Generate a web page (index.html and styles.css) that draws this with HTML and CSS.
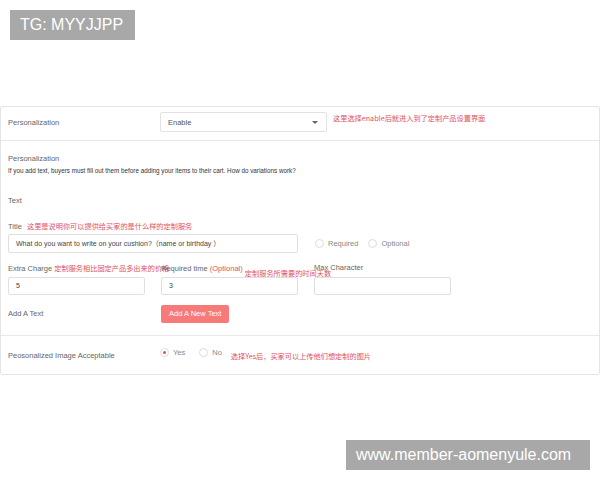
FILE: index.html
```html
<!DOCTYPE html>
<html lang="en">
<head>
    <meta charset="UTF-8">
    <title>Personalization</title>
    <link rel="stylesheet" href="styles.css">
</head>
<body>
    <div class="watermark watermark-top">TG: MYYJJPP</div>

    <div class="panel">
        <div class="row row-head">
            <span class="row-label">Personalization</span>
            <div class="select">
                <span>Enable</span>
                <span class="caret"></span>
            </div>
            <span class="note note-head">这里选择enable后就进入到了定制产品设置界面</span>
        </div>

        <div class="section">
            <div class="line title-line">Personalization</div>
            <div class="line hint">If you add text, buyers must fill out them before adding your items to their cart. How do variations work?</div>
            <div class="line text-line">Text</div>
            <div class="line label-line">Title <span class="note">这里是说明你可以提供给买家的是什么样的定制服务</span></div>

            <div class="fields">
                <div class="input wide">What do you want to write on your cushion?（name or birthday ）</div>
                <div class="radios">
                    <span class="radio"><i class="dot"></i>Required</span>
                    <span class="radio"><i class="dot"></i>Optional</span>
                </div>

                <div class="field-label">Extra Charge <span class="note">定制服务相比固定产品多出来的价格</span></div>
                <div class="field-label">Required time <span class="opt">(Optional)</span> <span class="note note-low">定制服务所需要的时间天数</span></div>
                <div class="field-label">Max Character</div>

                <div class="input">5</div>
                <div class="input">3</div>
                <div class="input"></div>

                <div class="add-label">Add A Text</div>
                <div><a href="#" class="btn">Add A New Text</a></div>
            </div>
        </div>

        <div class="row row-image">
            <span class="row-label">Peosonalized Image Acceptable</span>
            <span class="radio"><i class="dot checked"></i>Yes</span>
            <span class="radio"><i class="dot"></i>No</span>
            <span class="note note-image">选择Yes后，买家可以上传他们想定制的图片</span>
        </div>
    </div>

    <div class="watermark watermark-bottom">www.member-aomenyule.com</div>
</body>
</html>
```

FILE: styles.css
```css
* {
    margin: 0;
    padding: 0;
    box-sizing: border-box;
}

body {
    background: #fff;
    font-family: "Liberation Sans", Arial, "Noto Sans CJK SC", sans-serif;
    color: #666;
    font-size: 7.5px;
}

.watermark {
    position: absolute;
    background: #a8a8a8;
    color: #fff;
    font-size: 16px;
    line-height: 30px;
    padding: 0 10px;
}

.watermark-top {
    top: 10px;
    left: 10px;
    width: 125px;
}

.watermark-bottom {
    top: 440px;
    left: 346px;
    width: 244px;
    padding: 0 10px;
}

.panel {
    margin-top: 106px;
    width: 600px;
    border: 1px solid #e4e4e4;
    border-radius: 2px;
}

.row {
    display: flex;
    align-items: center;
    padding: 0 7px;
}

.row-label {
    width: 152px;
    flex-shrink: 0;
}

.row-head {
    height: 34px;
    padding-bottom: 3px;
    border-bottom: 1px solid #e8e8e8;
}

.select {
    width: 167px;
    height: 20px;
    border: 1px solid #e2e2e2;
    border-radius: 2px;
    display: flex;
    align-items: center;
    justify-content: space-between;
    padding: 0 8px 0 7px;
    color: #555;
}

.caret {
    width: 0;
    height: 0;
    border-left: 3px solid transparent;
    border-right: 3px solid transparent;
    border-top: 3px solid #666;
}

.note {
    color: #e0505e;
    font-family: "Noto Sans CJK SC", sans-serif;
    font-size: 7.2px;
    white-space: nowrap;
}

.note-head {
    margin-left: 6px;
    position: relative;
    top: -4px;
}

.section {
    padding: 12px 7px 12px;
    border-bottom: 1px solid #e8e8e8;
}

.line {
    line-height: 12px;
}

.hint {
    color: #333;
    font-size: 6.3px;
}

.text-line {
    margin-top: 18px;
}

.label-line {
    margin-top: 13px;
}

.label-line .note {
    margin-left: 3px;
}

.fields {
    display: grid;
    grid-template-columns: 137px 137px 137px;
    column-gap: 16px;
    margin-top: 1px;
}

.input {
    height: 18px;
    border: 1px solid #e0e0e0;
    border-radius: 2px;
    padding: 0 7px;
    line-height: 16px;
    color: #444;
    font-size: 7px;
}

.input.wide {
    grid-column: 1 / 3;
    height: 19px;
    line-height: 17px;
}

.radios {
    display: flex;
    align-items: center;
    gap: 10px;
    padding-left: 1px;
}

.radio {
    display: inline-flex;
    align-items: center;
    color: #888;
}

.dot {
    width: 9px;
    height: 9px;
    border: 1px solid #dcdcdc;
    border-radius: 50%;
    margin-right: 4px;
    display: inline-flex;
    align-items: center;
    justify-content: center;
}

.dot.checked::after {
    content: "";
    width: 3px;
    height: 3px;
    border-radius: 50%;
    background: #e0505e;
}

.field-label {
    line-height: 12px;
    margin-top: 9px;
    margin-bottom: 2px;
    white-space: nowrap;
}

.opt {
    color: #e0505e;
}

.note-low {
    position: relative;
    top: 5px;
}

.add-label {
    margin-top: 10px;
    line-height: 18px;
}

.btn {
    display: inline-block;
    margin-top: 10px;
    background: #f67a7a;
    color: #fff;
    text-decoration: none;
    line-height: 18px;
    padding: 0 8px;
    border-radius: 2px;
}

.row-image {
    height: 38px;
}

.row-image .radio {
    margin-right: 14px;
    position: relative;
    top: -3px;
}

.note-image {
    margin-left: -5px;
    position: relative;
    top: 1px;
}
```
